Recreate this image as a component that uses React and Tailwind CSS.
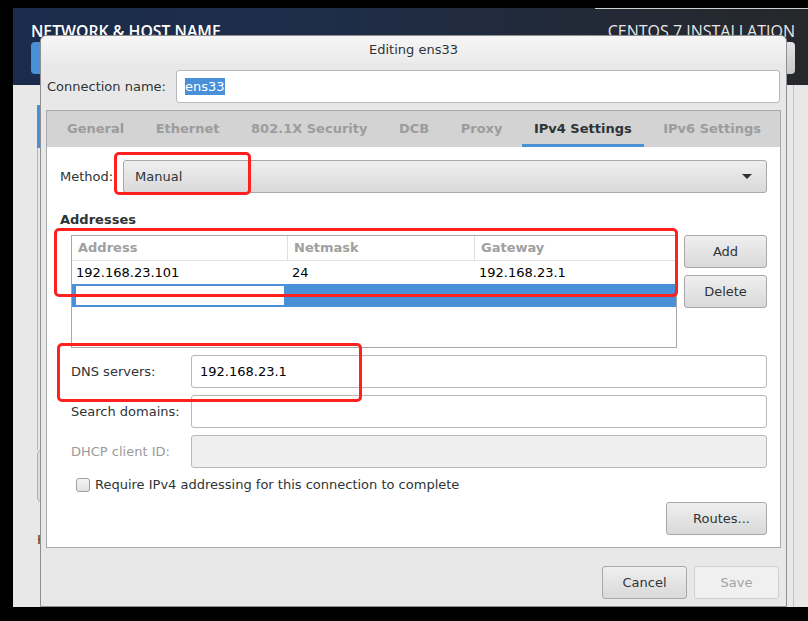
import React from "react";

const btn =
  "flex items-center justify-center h-[33px] rounded-[3px] border border-[#a8a8a8] bg-[linear-gradient(#efefef,#d9d9d9)] text-[#2e3436]";

const tabs = [
  "General",
  "Ethernet",
  "802.1X Security",
  "DCB",
  "Proxy",
  "IPv4 Settings",
  "IPv6 Settings",
];

function Field({ label, value, disabled }) {
  return (
    <div className="flex items-center mt-[7px] pl-[11px]">
      <span className={"w-[120px] " + (disabled ? "text-[#9a9a9a]" : "")}>{label}</span>
      <div
        className={
          "flex-1 h-[33px] flex items-center pl-[8px] rounded-[3px] border border-[#b8b8b8] text-black " +
          (disabled ? "bg-[#efefef]" : "bg-white")
        }
      >
        {value}
      </div>
    </div>
  );
}

function App() {
  return (
    <div className="relative w-[808px] h-[621px] bg-black overflow-hidden font-['DejaVu_Sans',sans-serif] text-[13px] text-[#2e3436]">
      {/* installer screen behind the dialog */}
      <div className="ml-[13px] mt-[8px] w-[795px] h-[599px] flex flex-col bg-[#e8e8e8]">
        <div className="h-[77px] flex flex-col bg-[linear-gradient(90deg,#1b2b4b_0%,#1d2d4a_35%,#222a38_70%,#26282b_100%)]">
          <div className="flex justify-end h-px">
            <div className="w-[213px] bg-[#d0d0d0]" />
          </div>
          <div className="flex justify-between pl-[18px] pr-[13px] pt-[15px] leading-[15px] text-white font-['Open_Sans',sans-serif]">
            <span className="text-[15.8px] font-semibold">NETWORK &amp; HOST NAME</span>
            <span className="text-[16px] text-[#e6e6e6]">CENTOS 7 INSTALLATION</span>
          </div>
          <div className="flex justify-between pl-[18px] pr-[13px] mt-[3px]">
            <div className="w-[60px] h-[32px] rounded-[4px] bg-[#4a90d9]" />
            <div className="w-[60px] h-[32px] rounded-[4px] bg-[linear-gradient(#e4e4e4,#c8c8c8)]" />
          </div>
        </div>
        <div className="flex-1 flex justify-between">
          <div className="pl-[24px] pt-[20px] flex flex-col">
            <div className="w-[40px] h-[43px] bg-[#4a90d9]" />
            <div className="w-[40px] h-[302px] border-l border-[#b5b5b5]" />
            <div className="w-[40px] h-[52px] rounded-[4px] border border-[#b0b0b0] bg-[#dedede]" />
            <span className="mt-[28px]">Host name:</span>
          </div>
          <div className="w-px mr-[14px] bg-[#c4c4c4]" />
        </div>
      </div>

      {/* Editing dialog */}
      <div className="absolute left-[40px] top-[35px] w-[747px] h-[572px] flex flex-col rounded-t-[6px] border border-[#8f8f8f] bg-[#e8e8e8]">
        <div className="h-[27px] flex items-center justify-center rounded-t-[6px] bg-[linear-gradient(#f6f6f6,#ebebeb)]">
          Editing ens33
        </div>

        <div className="flex items-center mt-[7px] px-[6px]">
          <span className="w-[129px]">Connection name:</span>
          <div className="flex-1 h-[33px] flex items-center pl-[8px] rounded-[3px] border border-[#b8b8b8] bg-white">
            <span className="bg-[#4a90d9] text-white leading-[17px]">ens33</span>
          </div>
        </div>

        <div className="mx-[5px] mt-[7px] h-[438px] flex flex-col border border-[#a9a9a9]">
          <div className="h-[36px] flex gap-[7.5px] pl-[8px] bg-[#d3d3d3] font-bold">
            {tabs.map((t) => (
              <div
                key={t}
                className={
                  "flex items-center px-3 pt-[3px] border-b-[3px] " +
                  (t === "IPv4 Settings"
                    ? "border-[#4a90d9] text-[#2e3436]"
                    : "border-transparent text-[#9c9c9c]")
                }
              >
                {t}
              </div>
            ))}
          </div>

          <div className="flex-1 flex flex-col bg-white px-[13px] pt-[13px]">
            <div className="flex items-center">
              <span className="w-[63px]">Method:</span>
              <div className="flex-1 h-[33px] flex items-center justify-between pl-[11px] pr-[14px] rounded-[3px] border border-[#a8a8a8] bg-[linear-gradient(#efefef,#d9d9d9)]">
                <span>Manual</span>
                <svg width="10" height="5" viewBox="0 0 10 5">
                  <path d="M0 0h10L5 5z" fill="#2e3436" />
                </svg>
              </div>
            </div>

            <div className="mt-[19px] leading-[16px] font-bold">Addresses</div>

            <div className="flex mt-[7px] pl-[11px]">
              <div className="w-[606px] h-[113px] flex flex-col border border-[#a8a8a8] text-black">
                <div className="h-[25px] flex border-b border-[#e2e2e2] font-bold text-[#a0a0a0]">
                  <div className="w-[216px] flex items-center pl-[6px] border-r border-[#e0e0e0]">Address</div>
                  <div className="w-[187px] flex items-center pl-[6px] border-r border-[#e0e0e0]">Netmask</div>
                  <div className="flex-1 flex items-center pl-[6px]">Gateway</div>
                </div>
                <div className="h-[23px] flex">
                  <div className="w-[216px] flex items-center pl-[4px]">192.168.23.101</div>
                  <div className="w-[187px] flex items-center pl-[4px]">24</div>
                  <div className="flex-1 flex items-center pl-[4px]">192.168.23.1</div>
                </div>
                <div className="h-[23px] flex items-center pl-[4px] bg-[#4a90d9]">
                  <div className="w-[208px] h-[19px] bg-white" />
                </div>
              </div>
              <div className="ml-[7px] flex-1 flex flex-col gap-[7px]">
                <div className={btn}>Add</div>
                <div className={btn}>Delete</div>
              </div>
            </div>

            <Field label="DNS servers:" value="192.168.23.1" />
            <Field label="Search domains:" value="" />
            <Field label="DHCP client ID:" value="" disabled />

            <div className="flex items-center gap-[5px] h-[14px] mt-[10px] pl-[16px]">
              <div className="w-[14px] h-[14px] rounded-[3px] border border-[#a0a0a0] bg-[linear-gradient(#f4f4f4,#e0e0e0)]" />
              <span>Require IPv4 addressing for this connection to complete</span>
            </div>

            <div className="flex justify-end mt-[10px]">
              <div className={btn + " w-[101px] pl-[10px]"}>Routes...</div>
            </div>
          </div>
        </div>

        <div className="flex justify-end gap-[7px] pr-[7px] mt-[18px]">
          <div className={btn + " w-[85px]"}>Cancel</div>
          <div className="w-[85px] h-[33px] flex items-center justify-center rounded-[3px] border border-[#cfcfcf] bg-[#f0f0f0] text-[#a3a3a3]">
            Save
          </div>
        </div>
      </div>

      {/* red annotation frames */}
      <div className="absolute left-[114px] top-[152px] w-[137px] h-[43px] rounded-[5px] border-[3px] border-[#ff2121]" />
      <div className="absolute left-[54px] top-[228px] w-[624px] h-[69px] rounded-[5px] border-[3px] border-[#ff2121]" />
      <div className="absolute left-[57px] top-[343px] w-[305px] h-[59px] rounded-[5px] border-[3px] border-[#ff2121]" />
    </div>
  );
}

export default App;
